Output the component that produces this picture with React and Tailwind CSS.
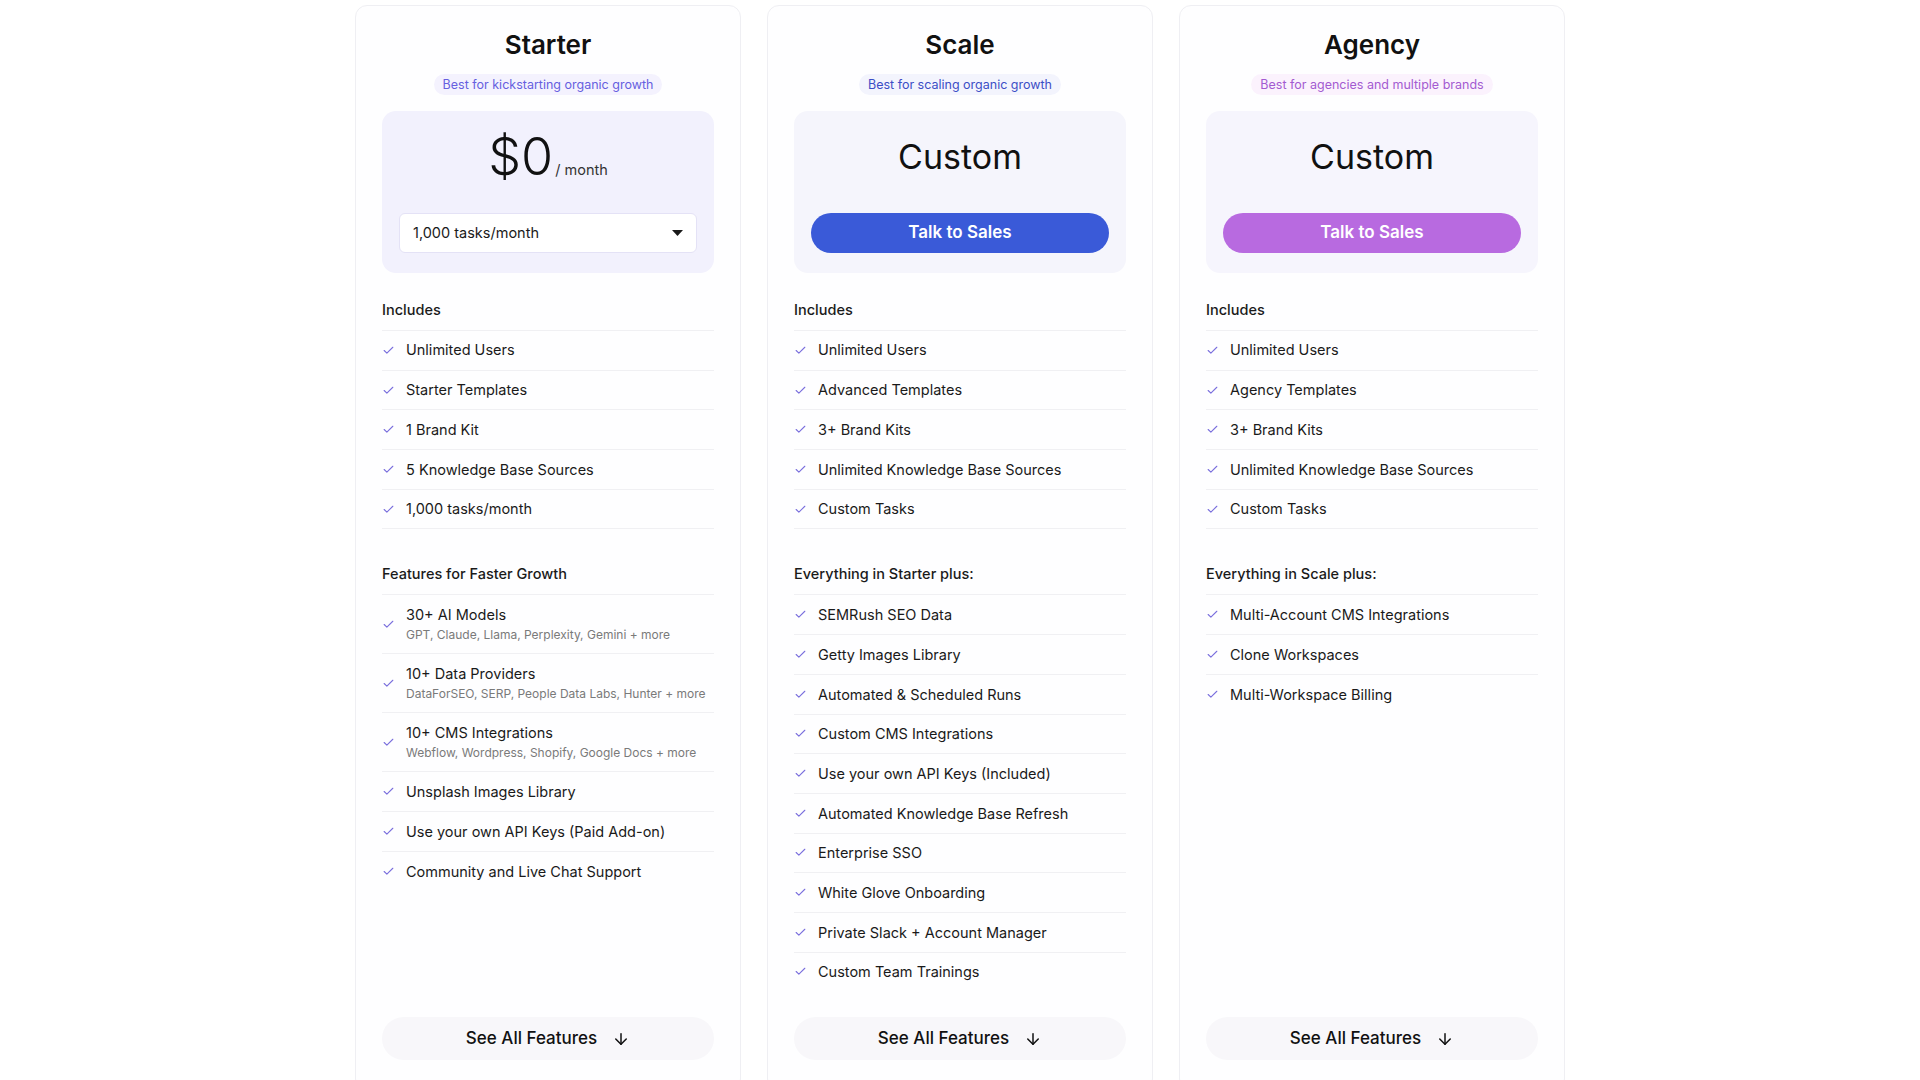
import { Check, ArrowDown } from "lucide-react";

const plans = [
  {
    name: "Starter",
    tagline: "Best for kickstarting organic growth",
    tagClass: "text-[#665fe0] bg-[#f4f2fe]",
    boxClass: "bg-[#f2f1fd]",
    price: "$0",
    includes: [
      "Unlimited Users",
      "Starter Templates",
      "1 Brand Kit",
      "5 Knowledge Base Sources",
      "1,000 tasks/month",
    ],
    extraTitle: "Features for Faster Growth",
    extras: [
      { title: "30+ AI Models", sub: "GPT, Claude, Llama, Perplexity, Gemini + more" },
      { title: "10+ Data Providers", sub: "DataForSEO, SERP, People Data Labs, Hunter + more" },
      { title: "10+ CMS Integrations", sub: "Webflow, Wordpress, Shopify, Google Docs + more" },
      { title: "Unsplash Images Library" },
      { title: "Use your own API Keys (Paid Add-on)" },
      { title: "Community and Live Chat Support" },
    ],
  },
  {
    name: "Scale",
    tagline: "Best for scaling organic growth",
    tagClass: "text-[#3c4ec6] bg-[#f3f4fd]",
    boxClass: "bg-[#f5f5fc]",
    button: "bg-[#3a5ad8]",
    includes: [
      "Unlimited Users",
      "Advanced Templates",
      "3+ Brand Kits",
      "Unlimited Knowledge Base Sources",
      "Custom Tasks",
    ],
    extraTitle: "Everything in Starter plus:",
    extras: [
      { title: "SEMRush SEO Data" },
      { title: "Getty Images Library" },
      { title: "Automated & Scheduled Runs" },
      { title: "Custom CMS Integrations" },
      { title: "Use your own API Keys (Included)" },
      { title: "Automated Knowledge Base Refresh" },
      { title: "Enterprise SSO" },
      { title: "White Glove Onboarding" },
      { title: "Private Slack + Account Manager" },
      { title: "Custom Team Trainings" },
    ],
  },
  {
    name: "Agency",
    tagline: "Best for agencies and multiple brands",
    tagClass: "text-[#a35bd1] bg-[#fbf2fd]",
    boxClass: "bg-[#f6f5fd]",
    button: "bg-[#b86ae0]",
    includes: [
      "Unlimited Users",
      "Agency Templates",
      "3+ Brand Kits",
      "Unlimited Knowledge Base Sources",
      "Custom Tasks",
    ],
    extraTitle: "Everything in Scale plus:",
    extras: [
      { title: "Multi-Account CMS Integrations" },
      { title: "Clone Workspaces" },
      { title: "Multi-Workspace Billing" },
    ],
  },
];

const Tick = () => (
  <Check className="w-[13px] h-[13px] text-[#7a6fdd] shrink-0" strokeWidth={2} />
);

const PlanCard = ({ plan }) => {
  return (
    <div className="w-[386px] flex flex-col border border-[#efeff3] rounded-[12px] bg-[#fefeff] px-[26px] pt-[22px] pb-[30px]">
      <h2 className="text-center text-[26px] leading-[34px] font-semibold text-[#111]">
        {plan.name}
      </h2>
      <div className="flex justify-center mt-[12px]">
        <span className={`text-[12.5px] leading-[21px] px-[9px] rounded-full ${plan.tagClass}`}>
          {plan.tagline}
        </span>
      </div>

      <div className={`mt-[16px] rounded-[14px] px-[17px] pt-[18px] pb-[20px] ${plan.boxClass}`}>
        <div className="h-[56px] flex items-center justify-center">
          {plan.price ? (
            <div className="flex items-baseline">
              <span className="text-[52px] leading-none font-light text-[#111]">{plan.price}</span>
              <span className="text-[14.5px] text-[#333] ml-[2px]">/ month</span>
            </div>
          ) : (
            <span className="text-[34px] leading-none text-[#111]">Custom</span>
          )}
        </div>
        {plan.button ? (
          <button
            className={`mt-[28px] w-full h-[40px] rounded-full text-white text-[17px] font-semibold ${plan.button}`}
          >
            Talk to Sales
          </button>
        ) : (
          <div className="mt-[28px] h-[40px] bg-white border border-[#e4e2f6] rounded-[6px] flex items-center justify-between pl-[13px] pr-[13px]">
            <span className="text-[14.5px] text-[#1a1a1a]">1,000 tasks/month</span>
            <svg width="11" height="6" viewBox="0 0 11 6">
              <path d="M0 0h11L5.5 6z" fill="#1a1a1a" />
            </svg>
          </div>
        )}
      </div>

      <div className="mt-[27px] text-[14.5px] leading-[20px] font-medium text-[#1a1a1a]">Includes</div>
      <ul className="mt-[10px] border-b border-[#f0f0f3]">
        {plan.includes.map((item) => (
          <li
            key={item}
            className="h-[39.7px] border-t border-[#f0f0f3] flex items-center gap-[11px] text-[14.5px] text-[#1a1a1a]"
          >
            <Tick />
            {item}
          </li>
        ))}
      </ul>

      <div className="mt-[35px] text-[14.5px] leading-[20px] font-medium text-[#1a1a1a]">
        {plan.extraTitle}
      </div>
      <ul className="mt-[10px]">
        {plan.extras.map((item) => (
          <li
            key={item.title}
            className={`border-t border-[#f0f0f3] flex items-center gap-[11px] ${item.sub ? "py-[9px]" : "h-[39.7px]"}`}
          >
            <Tick />
            <div>
              <div className="text-[14.5px] leading-[21px] text-[#1a1a1a]">{item.title}</div>
              {item.sub && (
                <div className="text-[12px] leading-[19px] text-[#7a7a7a] whitespace-nowrap">{item.sub}</div>
              )}
            </div>
          </li>
        ))}
      </ul>

      <div className="mt-auto pt-[26px]">
        <button className="w-full h-[43px] rounded-full bg-[#f8f7fa] flex items-center justify-center gap-[15px] text-[17px] font-medium text-[#111]">
          See All Features
          <ArrowDown className="w-[18px] h-[18px]" strokeWidth={2} />
        </button>
      </div>
    </div>
  );
};

const App = () => {
  return (
    <div className="min-h-screen bg-white flex justify-center items-stretch gap-[26px] pt-[5px] font-['Inter',sans-serif]">
      {plans.map((plan) => (
        <PlanCard key={plan.name} plan={plan} />
      ))}
    </div>
  );
};

export default App;
